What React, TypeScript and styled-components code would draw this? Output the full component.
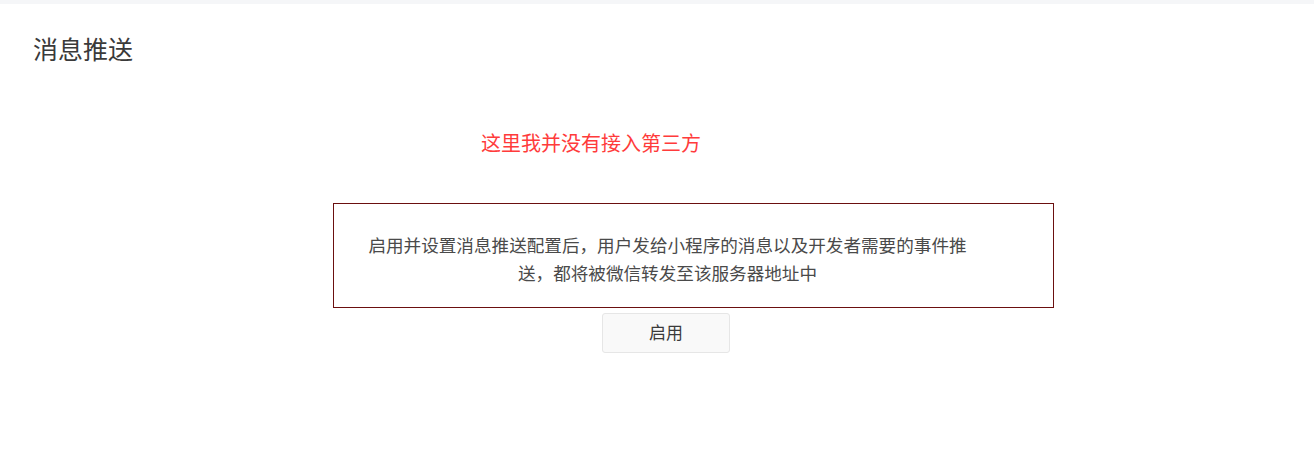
import styled, { createGlobalStyle } from "styled-components";

export default function App() {
  return (
    <>
      <GlobalStyle />
      <SPage>
        <STopStrip />
        <STitle children="消息推送" />
        <SContent>
          <SNotice children="这里我并没有接入第三方" />
          <SInfoBox>
            <SInfoText>
              启用并设置消息推送配置后，用户发给小程序的消息以及开发者需要的事件推送，都将被微信转发至该服务器地址中
            </SInfoText>
          </SInfoBox>
          <SButtonRow>
            <SButton children="启用" />
          </SButtonRow>
        </SContent>
      </SPage>
    </>
  );
}

// #region Styles

const GlobalStyle = createGlobalStyle`
  html, body {
    margin: 0;
    padding: 0;
    background: #fff;
  }
  body {
    font-family: "Noto Sans CJK SC", "Noto Sans", "Liberation Sans", sans-serif;
    color: #333;
  }
`;

const SPage = styled.div`
  display: flex;
  flex-direction: column;
  min-height: 476px;
`;

const STopStrip = styled.div`
  height: 4px;
  background: #f5f6f8;
`;

const STitle = styled.h1`
  margin: 0;
  padding: 27px 0 0 33px;
  font-size: 25px;
  line-height: 34px;
  font-weight: 400;
  color: #3a3a3a;
`;

const SContent = styled.div`
  display: flex;
  flex-direction: column;
  align-items: flex-start;
  padding: 64px 0 0 333px;
`;

const SNotice = styled.p`
  margin: 0 0 46px 148px;
  font-size: 20px;
  line-height: 28px;
  color: #ff3b3b;
`;

const SInfoBox = styled.div`
  box-sizing: border-box;
  width: 721px;
  height: 105px;
  padding: 27px 86px 0 34px;
  border: 1px solid #6b0f0f;
`;

const SInfoText = styled.p`
  margin: 0;
  font-size: 17.6px;
  line-height: 28px;
  text-align: center;
  color: #4a4a4a;
`;

const SButtonRow = styled.div`
  display: flex;
  justify-content: center;
  width: 600px;
  margin: 5px 0 0 33px;
`;

const SButton = styled.button.attrs({ type: "button" })`
  width: 128px;
  height: 40px;
  padding: 0 0 3px;
  font-family: inherit;
  font-size: 17px;
  color: #3a3a3a;
  background: #f9f9f9;
  border: 1px solid #e6e6e6;
  border-radius: 3px;
  cursor: pointer;
`;

// #endregion
